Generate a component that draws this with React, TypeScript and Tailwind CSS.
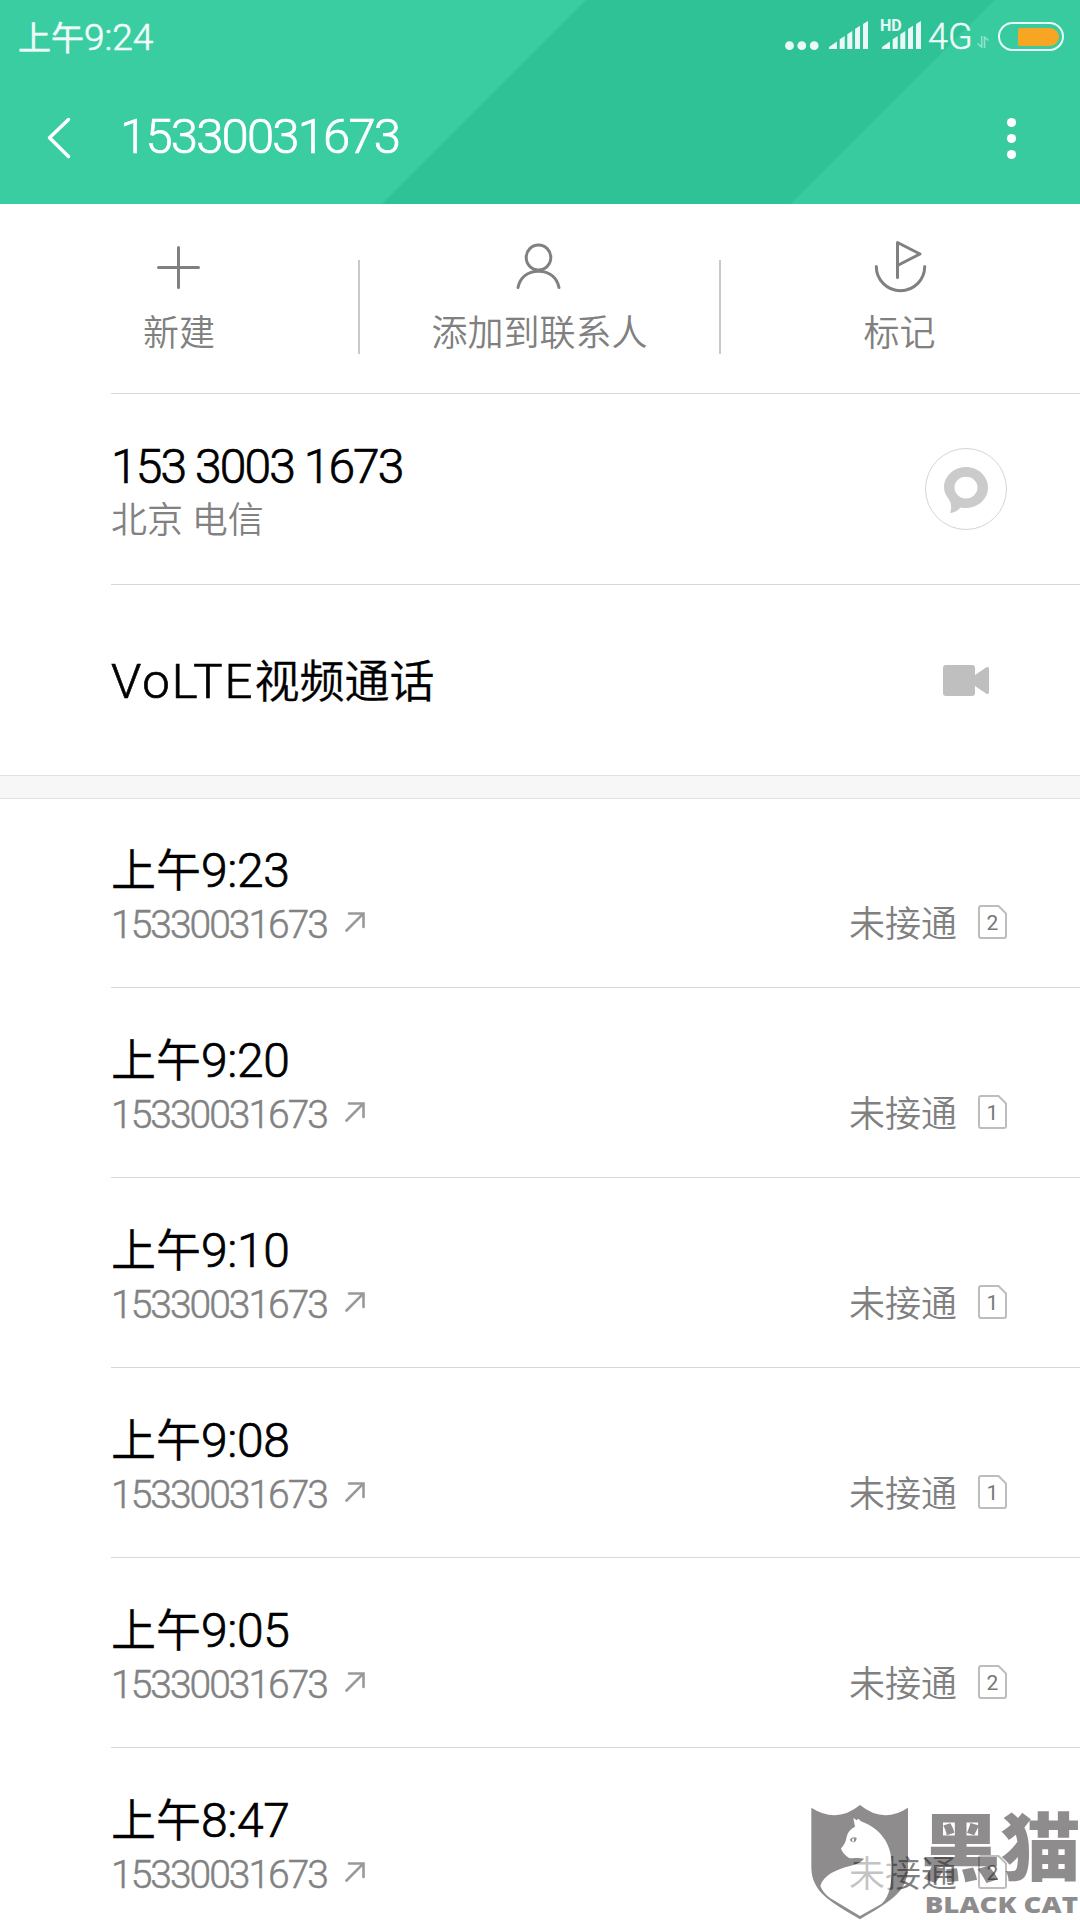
import type { ReactNode } from "react";
import clsx from "clsx";

type Call = { time: string; sim: number };

const NUMBER = "15330031673";

const calls: Call[] = [
  { time: "9:23", sim: 2 },
  { time: "9:20", sim: 1 },
  { time: "9:10", sim: 1 },
  { time: "9:08", sim: 1 },
  { time: "9:05", sim: 2 },
  { time: "8:47", sim: 2 },
];

function SignalBars() {
  return (
    <svg width="39" height="28" viewBox="0 0 39 28" fill="currentColor">
      <path d="M0 28v-2l8-5.500V28zM10.700 28V18.300l5-3.300v13zM18.300 28V13.300l5-3.300v18zM26 28V8l5-3.300V28zM34 28V3l5-3v28z" />
    </svg>
  );
}

function StatusBar() {
  return (
    <div className="flex h-[72px] items-start text-white/90">
      <div className="ml-[18px] mt-[16px] text-[37px] leading-[44px] [-webkit-text-stroke:0.6px]">
        <span className="text-[33px]">上午</span>9:24
      </div>
      <svg className="ml-auto mt-[41px]" width="34" height="10" viewBox="0 0 34 10" fill="currentColor">
        <circle cx="4.500" cy="4.700" r="4.400" />
        <circle cx="16.800" cy="4.700" r="4.400" />
        <circle cx="29.200" cy="4.700" r="4.400" />
      </svg>
      <div className="ml-[10px] mt-[21px]">
        <SignalBars />
      </div>
      <div className="relative ml-[14px] mt-[21px]">
        <SignalBars />
        <span className="absolute -left-[2px] -top-[3px] text-[16px] font-bold leading-[16px]">HD</span>
      </div>
      <div className="ml-[7px] mt-[15px] w-[49px] text-[36px] leading-[44px] [-webkit-text-stroke:0.4px]">4G</div>
      <svg className="mt-[36px] opacity-50" width="12" height="12" viewBox="0 0 12 12" fill="none" stroke="currentColor" strokeWidth="1.600">
        <path d="M4.700 0v11L.5 7.500M7.500 12V1.200l4 3.300" />
      </svg>
      <div className="ml-[9px] mr-[16px] mt-[22px] flex h-[29px] w-[66px] items-center justify-end rounded-full border-[2.500px] border-white/90 pr-[3px]">
        <div className="h-[18px] w-[41px] rounded-l-[2px] rounded-r-[9px] bg-[#f6a623]" />
      </div>
    </div>
  );
}

function Header() {
  return (
    <header className="relative h-[204px] bg-[#3bcda2]">
      <svg className="absolute inset-0" width="1080" height="204" viewBox="0 0 1080 204">
        <path d="M586 0H995L791 204H382Z" fill="#2fc297" />
        <path d="M995 0H1080V204H791Z" fill="#38cb9f" />
      </svg>
      <div className="relative text-white">
        <StatusBar />
        <div className="flex h-[132px] items-start">
          <svg className="ml-[47px] mt-[45px]" width="24" height="42" viewBox="0 0 24 42" fill="none" stroke="currentColor" strokeWidth="3.500" strokeLinecap="round" strokeLinejoin="round">
            <path d="M21.500 2.500L2.500 20.800l19 18.700" />
          </svg>
          <h1 className="ml-[49px] mt-[35px] text-[49px] leading-[60px] tracking-[-1.800px] [-webkit-text-stroke:0.7px]">{NUMBER}</h1>
          <svg className="ml-auto mr-[63px] mt-[45px]" width="11" height="44" viewBox="0 0 11 44" fill="currentColor">
            <circle cx="5.500" cy="5.500" r="4.600" />
            <circle cx="5.500" cy="21.500" r="4.600" />
            <circle cx="5.500" cy="37.500" r="4.600" />
          </svg>
        </div>
      </div>
    </header>
  );
}

function Action({ label, className, last, children }: { label: string; className: string; last?: boolean; children: ReactNode }) {
  return (
    <div className={clsx("relative flex flex-col items-center pt-[36px] text-[#808080]", className)}>
      <svg width="54" height="54" viewBox="0 0 54 54" fill="none" stroke="currentColor" strokeWidth="3" strokeLinecap="round" strokeLinejoin="round">
        {children}
      </svg>
      <span className="mt-[14px] pr-[2px] text-[36px] leading-[52px]">{label}</span>
      {!last && <div className="absolute right-0 top-[56px] h-[94px] w-[2px] bg-[#c9c9c9]" />}
    </div>
  );
}

function Actions() {
  return (
    <div className="h-[190px]">
      <div className="flex h-[189px]">
        <Action label="新建" className="w-[360px]">
          <path d="M25.500 7.500v40M5.500 27.500h40" />
        </Action>
        <Action label="添加到联系人" className="w-[361px]">
          <ellipse cx="24.500" cy="17.500" rx="12.300" ry="12.500" />
          <path d="M4 47.500C6 37.500 13.500 31.300 24.500 31.300S43 37.500 45 47.500" />
        </Action>
        <Action label="标记" className="w-[359px]" last>
          <path d="M23.500 37.500V2.500L46 14 23.500 25.500" />
          <path d="M2.300 26.500a24.200 24.200 0 0 0 48.400 0" />
        </Action>
      </div>
      <div className="ml-[111px] h-px bg-[#d8d8d8]" />
    </div>
  );
}

function Row({ className, children }: { className?: string; children: ReactNode }) {
  return <div className={clsx("ml-[111px] flex border-[#d8d8d8] pr-[73px]", className)}>{children}</div>;
}

function SimBadge({ sim }: { sim: number }) {
  return (
    <div className="relative h-[34px] w-[29px]">
      <svg className="absolute inset-0" width="29" height="34" viewBox="0 0 29 34" fill="none" stroke="#bdbdbd" strokeWidth="2">
        <path d="M3 1h17.500L28 8.500V31a2 2 0 0 1-2 2H3a2 2 0 0 1-2-2V3a2 2 0 0 1 2-2z" />
      </svg>
      <span className="relative block text-center text-[21px] font-normal leading-[36px] text-[#777]">{sim}</span>
    </div>
  );
}

function CallRow({ time, sim }: Call) {
  return (
    <Row className="h-[190px] border-b">
      <div className="pt-[43px]">
        <div className="text-[48px] leading-[60px] tracking-[-0.400px] text-black [-webkit-text-stroke:0.7px]">
          <span className="text-[45px] tracking-normal [-webkit-text-stroke:0.3px]">上午</span>
          {time}
        </div>
        <div className="mt-px flex items-start text-[#828282]">
          <span className="text-[39px] leading-[44px] tracking-[-2px] [-webkit-text-stroke:0.5px]">{NUMBER}</span>
          <svg className="ml-[18px] mt-[9px]" width="20" height="20" viewBox="0 0 20 20" fill="none" stroke="#999" strokeWidth="2.600" strokeLinecap="round">
            <path d="M1.500 18.500L18 1.800M4 1.500h14.500V15" />
          </svg>
        </div>
      </div>
      <div className="ml-auto mt-[98px] flex h-[52px] items-center gap-[21px] self-start">
        <span className="pt-[5px] text-[36px] leading-[52px] text-[#808080]">未接通</span>
        <SimBadge sim={sim} />
      </div>
    </Row>
  );
}

function Watermark() {
  return (
    <svg className="absolute bottom-0 right-0 opacity-[0.53]" width="290" height="140" viewBox="0 0 870 420" fill="#2c2829">
      <path d="M64 83Q140 132 210 75Q280 132 354 83V262C354 340 290 370 210 418C130 370 64 340 64 262Z" />
      <path
        d="M190 114L200 121L205 116L213 124C270 145 304 190 305 250C306 310 300 350 274 372L210 408L120 354C104 342 96 330 91 318C100 285 140 268 180 258C202 252 215 246 222 236C205 232 190 236 177 234C168 228 156 218 153 205C162 195 168 185 170 170C174 155 182 146 195 140Z"
        fill="#fff"
      />
      <path d="M180 178Q190 168 200 174Q199 186 190 187Q181 187 180 178Z" />
      <path d="M186 177q2 5 0 9l6-2v-9z" fill="#fff" />
      <text x="392" y="286" fontSize="222" fontWeight="900" textLength="480" lengthAdjust="spacingAndGlyphs" fontFamily="'Noto Sans CJK SC', sans-serif">
        黑猫
      </text>
      <text x="404" y="398" fontSize="70" fontWeight="800" textLength="460" lengthAdjust="spacingAndGlyphs" fontFamily="'Open Sans', sans-serif">
        BLACK CAT
      </text>
    </svg>
  );
}

export default function App() {
  return (
    <div className="relative h-[1920px] w-[1080px] overflow-hidden bg-white font-['Roboto','Noto_Sans_CJK_SC',sans-serif] font-[350]">
      <Header />
      <Actions />

      <Row className="h-[191px] border-b">
        <div className="pt-[43px]">
          <div className="text-[48px] leading-[60px] tracking-[-1.900px] text-black [-webkit-text-stroke:0.7px]">153 3003 1673</div>
          <div className="text-[36px] leading-[48px] text-[#828282]">北京 电信</div>
        </div>
        <div className="ml-auto mt-[54px] flex h-[82px] w-[82px] items-center justify-center rounded-full border border-[#d5d5d5]">
          <svg width="46" height="48" viewBox="0 0 46 48" fill="#cbcbcb">
            <path
              fillRule="evenodd"
              d="M23 2C35 2 45 11 45 22.500S35 43 23 43C21 43 19 42.800 17.500 42.400C15 45.500 11.500 47.800 7 48C8.800 43 8.500 38.500 6 34.500C3 30.500 1 27 1 22.500C1 11 11 2 23 2ZM23 11.700C16.500 11.700 11.500 16.500 11.500 22.500S16.500 33.500 23 33.500S34.500 28.500 34.500 22.500S29.500 11.700 23 11.700Z"
            />
          </svg>
        </div>
      </Row>

      <Row className="h-[190px] items-center">
        <div className="pt-[4px] text-[49px] leading-[60px] tracking-[2.100px] text-black [-webkit-text-stroke:0.7px]">
          VoLTE<span className="text-[45px] tracking-normal [-webkit-text-stroke:0.3px]">视频通话</span>
        </div>
        <svg className="ml-auto mr-[18px]" width="46" height="31" viewBox="0 0 46 31" fill="#bfbfbf">
          <rect width="32" height="31" rx="3" />
          <path d="M32 10L43 2.500Q46 1 46 4V27Q46 30 43 28.500L32 21Z" />
        </svg>
      </Row>

      <div className="-mb-px h-[24px] border-y border-[#e2e2e2] bg-[#f7f7f7]" />

      {calls.map((call) => (
        <CallRow key={call.time} {...call} />
      ))}

      <Watermark />
    </div>
  );
}
